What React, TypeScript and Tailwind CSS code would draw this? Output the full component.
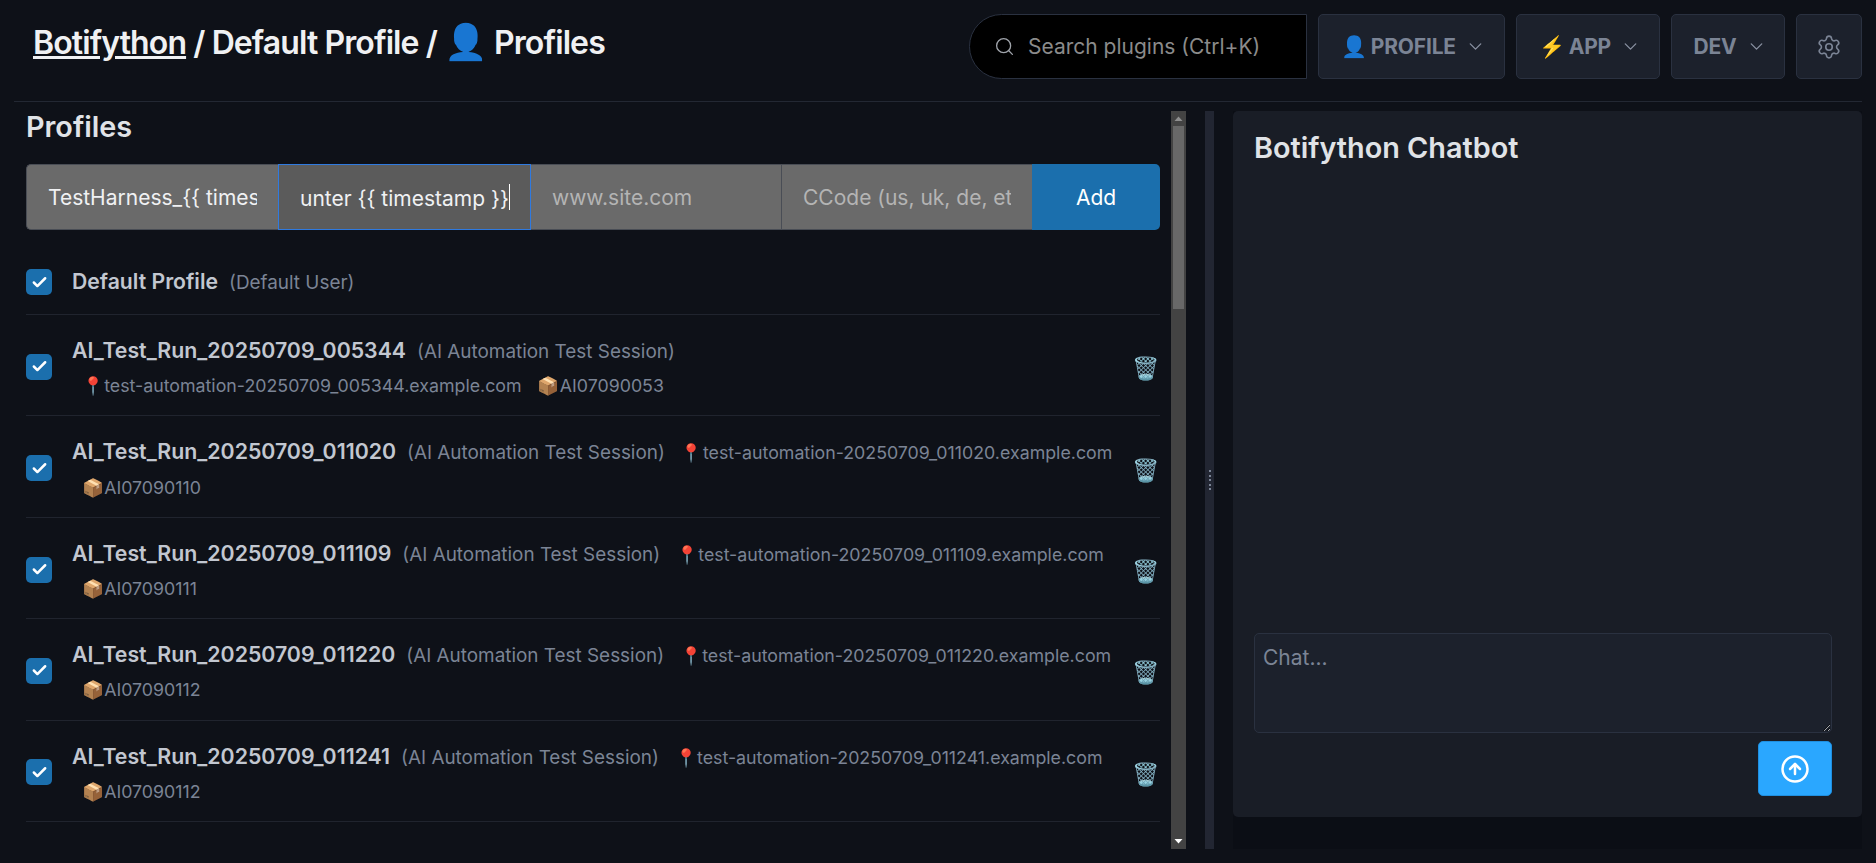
import { ChevronDown, CircleArrowUp, Search, Settings, Check } from "lucide-react";

const known = [
  { name: "AI_Test_Run_20250709_005344", stamp: "005344", code: "AI07090053" },
  { name: "AI_Test_Run_20250709_011020", stamp: "011020", code: "AI07090110" },
  { name: "AI_Test_Run_20250709_011109", stamp: "011109", code: "AI07090111" },
  { name: "AI_Test_Run_20250709_011220", stamp: "011220", code: "AI07090112" },
  { name: "AI_Test_Run_20250709_011241", stamp: "011241", code: "AI07090112" },
  { name: "AI_Test_Run_20250709_011302", stamp: "011302", code: "AI07090113" },
];

function Box() {
  return (
    <span className="flex h-[26px] w-[26px] shrink-0 items-center justify-center rounded-[5px] bg-[#1b6fad]">
      <Check className="h-[17px] w-[17px] text-white" strokeWidth={3.5} />
    </span>
  );
}

function NavButton({ label, icon, width }: { label: string; icon?: string; width: string }) {
  return (
    <button className={`flex h-[65px] items-center justify-center rounded-[5px] border border-[#2a3140] bg-[#1c212c] pl-[4px] text-[21px] font-bold tracking-[-0.2px] text-[#7b8495] ${width}`}>
      <span className="whitespace-pre">
        {icon && <span className="mr-[-1px]">{icon} </span>}
        {label}
      </span>
      <ChevronDown className="ml-[9px] h-[21px] w-[21px] text-[#8a92a2]" strokeWidth={1.5} />
    </button>
  );
}

function Scrollbar() {
  return (
    <div className="flex h-full w-[15px] shrink-0 flex-col items-center bg-[#434343]">
      <svg viewBox="0 0 15 15" className="h-[15px] w-[15px] shrink-0">
        <path d="M7.5 5.5 L11.5 10 L3.5 10 Z" fill="#8f8f8f" />
      </svg>
      <div className="h-[183px] w-[11px] shrink-0 bg-[#686868]" />
      <div className="flex-1" />
      <svg viewBox="0 0 15 15" className="h-[15px] w-[15px] shrink-0">
        <path d="M3.5 5 L11.5 5 L7.5 9.5 Z" fill="#ffffff" />
      </svg>
    </div>
  );
}

export default function App() {
  return (
    <div className="h-[863px] overflow-hidden bg-[#0e1118] px-[14px] font-['Inter','Noto_Color_Emoji',sans-serif] text-[#c2c7d0]">
      <header className="flex h-[102px] items-start justify-between border-b border-[#232833] pt-[15px]">
        <h1 className="pl-[19px] text-[32px] leading-[56px] font-semibold tracking-[-0.9px] whitespace-nowrap text-[#f0f1f3]">
          <a className="underline">Botifython</a> / Default Profile / <span className="text-[35px] leading-none">👤</span> Profiles
        </h1>
        <div className="-mt-px flex gap-[11px]">
          <div className="flex h-[65px] w-[338px] items-center rounded-l-full border border-[#2a3140] bg-black pl-[24px] text-[21px] text-[#8b8b8b]">
            <Search className="h-[21px] w-[21px] text-[#a0a4ab]" strokeWidth={1.5} />
            <span className="ml-[13px] whitespace-nowrap">Search plugins (Ctrl+K)</span>
          </div>
          <NavButton icon="👤" label="PROFILE" width="w-[187px]" />
          <NavButton icon="⚡" label="APP" width="w-[144px]" />
          <NavButton label="DEV" width="w-[114px]" />
          <button className="flex h-[65px] w-[66px] items-center justify-center rounded-[5px] border border-[#2a3140] bg-[#1c212c]">
            <Settings className="h-[26px] w-[26px] text-[#7b8495]" strokeWidth={1.5} />
          </button>
        </div>
      </header>

      <div className="mt-[9px] flex h-[738px]">
        <main className="h-full w-[1157px] shrink-0 overflow-hidden pr-[11px] pl-[12px]">
          <h2 className="text-[28.8px] leading-[32px] font-semibold text-[#e0e3e7]">Profiles</h2>
          <form className="mt-[21px] flex h-[66px] text-[21px]">
            <input
              readOnly
              value="TestHarness_{{ timestamp }}"
              className="w-[252px] rounded-l-[5px] border border-r-0 border-[#494d55] bg-[#6a6a6a] px-[21px] pt-[2px] text-[#f0f1f3] outline-none"
            />
            <div className="relative w-[253px]">
              <input
                readOnly
                value="unter {{ timestamp }}"
                className="h-full w-full border border-[#2f7ae0] bg-[#5b5b5b] px-[21px] pt-[2px] text-[#f0f1f3] outline-none"
              />
              <span className="absolute top-[20px] left-[231px] h-[26px] w-px bg-white" />
            </div>
            <input
              readOnly
              placeholder="www.site.com"
              className="w-[250px] border-y border-[#494d55] bg-[#6a6a6a] px-[21px] pt-[2px] outline-none placeholder:text-[#b4b4b4]"
            />
            <input
              readOnly
              placeholder="CCode (us, uk, de, etc)"
              className="w-[251px] border-y border-l border-[#494d55] bg-[#6a6a6a] px-[21px] pt-[2px] outline-none placeholder:text-[#b4b4b4]"
            />
            <button className="w-[128px] rounded-r-[5px] bg-[#1b6fad] pt-[2px] text-white">Add</button>
          </form>

          <ul className="mt-[18px]">
            <li className="flex h-[67px] items-center gap-[20px] border-b border-[#20242e] pt-[2px]">
              <Box />
              <div className="flex items-baseline gap-[11px] whitespace-nowrap">
                <span className="text-[21.2px] font-semibold">Default Profile</span>
                <span className="text-[18.9px] text-[#7b8495]">(Default User)</span>
              </div>
            </li>
            {known.map((p) => (
              <li key={p.name} className="flex items-center gap-[20px] border-b border-[#20242e] pt-[18px] pb-[12px]">
                <span className="mb-[3px]">
                  <Box />
                </span>
                <div className="flex w-[1046px] shrink-0 flex-wrap items-baseline gap-x-[6px] leading-[34.2px] whitespace-nowrap">
                  <span className="text-[21.3px] font-semibold">{p.name}</span>
                  <span className="ml-[5px] text-[18.9px] text-[#7b8495]">(AI Automation Test Session)</span>
                  <span className="ml-[10px] text-[17.8px] text-[#7b8495]">📍test-automation-20250709_{p.stamp}.example.com</span>
                  <span className="ml-[10px] text-[17.8px] text-[#7b8495]">📦{p.code}</span>
                </div>
                <span className="-ml-[6px] text-[22px] leading-none">🗑️</span>
              </li>
            ))}
          </ul>
        </main>

        <Scrollbar />

        <div className="ml-[19px] flex w-[9px] shrink-0 flex-col items-center justify-center gap-[2.5px] bg-[#222632]">
          {[0, 1, 2, 3, 4].map((d) => (
            <span key={d} className="h-[2px] w-[2px] bg-[#7b8495]" />
          ))}
        </div>

        <aside className="ml-[19px] flex-1 bg-[#0b0e15]">
          <div className="flex h-[706px] flex-col rounded-[5px] bg-[#191d26] pt-[21px] pr-[30px] pl-[21px]">
            <h2 className="text-[28.8px] leading-[32px] font-semibold text-[#e0e3e7]">Botifython Chatbot</h2>
            <textarea
              placeholder="Chat..."
              className="mt-auto h-[100px] w-full rounded-[5px] border border-[#2a3140] bg-[#1c212c] px-[8px] py-[8px] text-[21px] outline-none placeholder:text-[#7b8495]"
            />
            <div className="mt-[8px] mb-[21px] flex justify-end">
              <button className="flex h-[55px] w-[74px] items-center justify-center rounded-[5px] border border-[#1f8fe0] bg-[#2aa7ff]">
                <CircleArrowUp className="h-[30px] w-[30px] text-white" strokeWidth={2} />
              </button>
            </div>
          </div>
        </aside>
      </div>
    </div>
  );
}
